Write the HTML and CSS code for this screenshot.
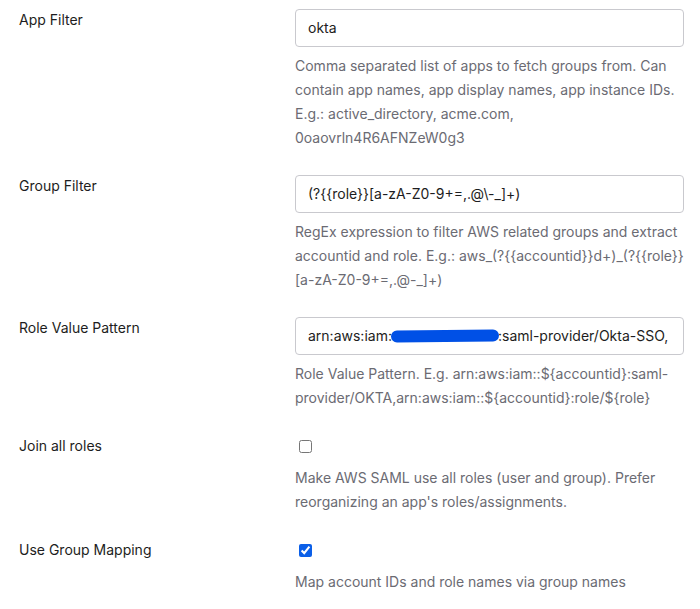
FILE: index.html
```html
<!DOCTYPE html>
<html lang="en">

<head>
  <meta charset="utf-8">
  <meta name="viewport" content="width=device-width, initial-scale=1.0">
  <title>AWS SAML Settings</title>
  <link rel="stylesheet" href="styles.css">
</head>

<body>
  <form class="settings">
    <div class="field">
      <label class="field-label" for="app-filter">App Filter</label>
      <div class="field-control">
        <div class="input" id="app-filter">okta</div>
        <p class="help">Comma separated list of apps to fetch groups from. Can contain app names, app display names, app instance IDs. E.g.: active_directory, acme.com, 0oaovrln4R6AFNZeW0g3</p>
      </div>
    </div>

    <div class="field">
      <label class="field-label" for="group-filter">Group Filter</label>
      <div class="field-control">
        <div class="input" id="group-filter">(?{{role}}[a-zA-Z0-9+=,.@\-_]+)</div>
        <p class="help">RegEx expression to filter AWS related groups and extract accountid and role. E.g.: aws_(?{{accountid}}d+)_(?{{role}} [a-zA-Z0-9+=,.@-_]+)</p>
      </div>
    </div>

    <div class="field">
      <label class="field-label" for="role-pattern">Role Value Pattern</label>
      <div class="field-control">
        <div class="input" id="role-pattern">arn:aws:iam:<span class="redacted"></span>:saml-provider/Okta-SSO,</div>
        <p class="help">Role Value Pattern. E.g. arn:aws:iam::${accountid}:saml-provider/OKTA,arn:aws:iam::${accountid}:role/${role}</p>
      </div>
    </div>

    <div class="field">
      <label class="field-label" for="join-roles">Join all roles</label>
      <div class="field-control">
        <div class="check-row"><input type="checkbox" id="join-roles"></div>
        <p class="help">Make AWS SAML use all roles (user and group). Prefer reorganizing an app's roles/assignments.</p>
      </div>
    </div>

    <div class="field">
      <label class="field-label" for="group-mapping">Use Group Mapping</label>
      <div class="field-control">
        <div class="check-row"><input type="checkbox" id="group-mapping" checked></div>
        <p class="help">Map account IDs and role names via group names</p>
      </div>
    </div>
  </form>
</body>

</html>
```

FILE: styles.css
```css
body,
html {
  margin: 0;
  padding: 0;
  background: white;
  font-family: Inter, "Noto Sans", sans-serif;
  font-size: 14px;
  color: #1d1d21;
}

.settings {
  padding: 8px 16px 0 19px;
}

.field {
  display: grid;
  grid-template-columns: 276px minmax(0, 1fr);
  margin-bottom: 24px;
}

.field-label {
  line-height: 24px;
}

.input {
  height: 36px;
  margin-top: 1px;
  border: 1px solid #c9c9ce;
  border-radius: 4px;
  padding: 0 12px;
  line-height: 36px;
  white-space: nowrap;
  overflow: hidden;
  color: #1d1d21;
}

/* blue scribble over the account id */
.redacted {
  display: inline-block;
  width: 108px;
  height: 12px;
  margin: 0 -1px;
  vertical-align: -1px;
  background: #0050e6;
  border-radius: 6px;
  transform: rotate(-0.6deg);
}

.check-row {
  height: 24px;
  display: flex;
  align-items: center;
}

.check-row input {
  margin: 1px 0 0 4px;
  width: 13px;
  height: 13px;
  accent-color: #0b5fe8;
}

.help {
  margin: 7px 0 0;
  line-height: 24px;
  color: #6b6b73;
}

.check-row + .help {
  margin-top: 8px;
}
```
